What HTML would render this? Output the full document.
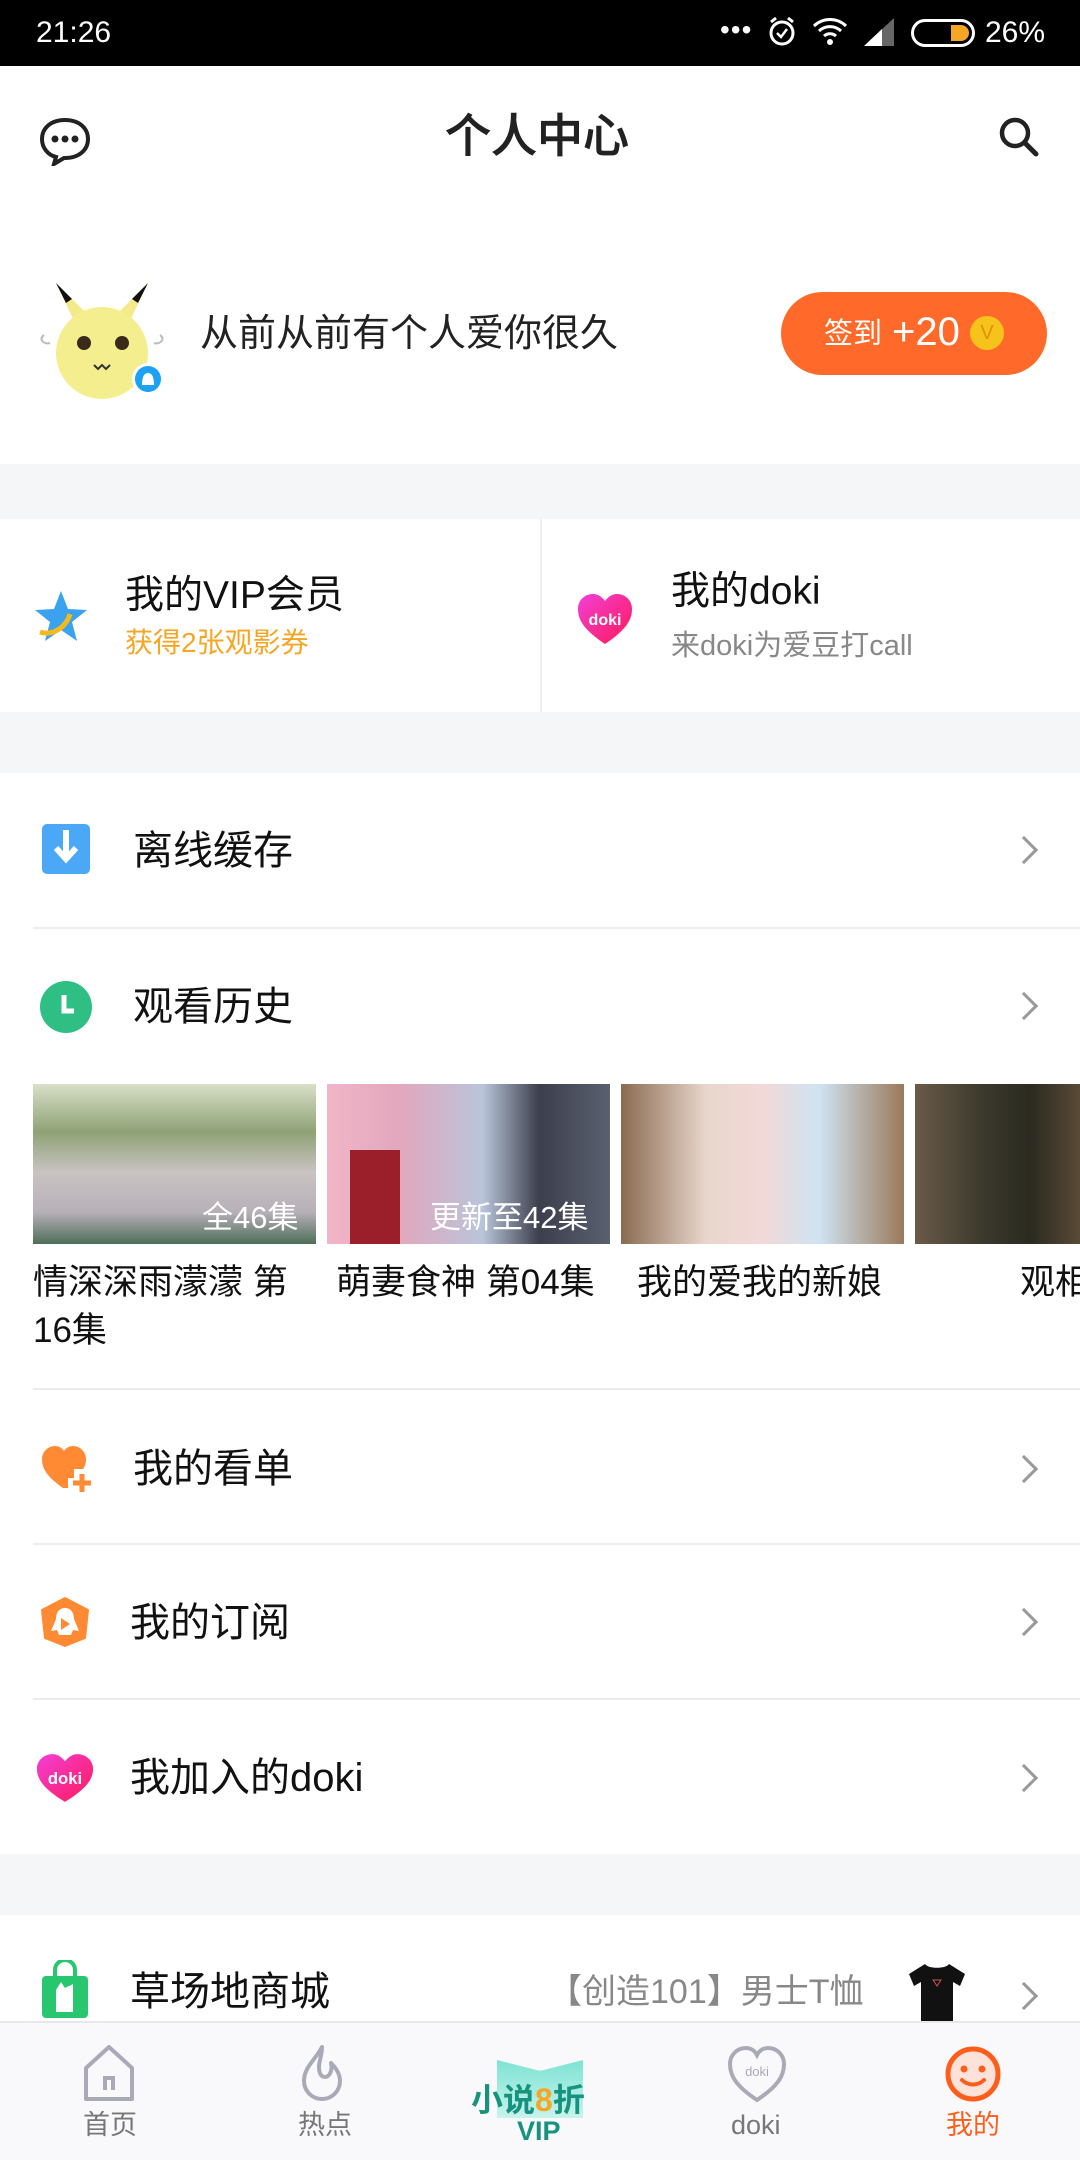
<!DOCTYPE html>
<html><head><meta charset="utf-8"><style>
*{margin:0;padding:0;box-sizing:border-box}
body{width:1080px;height:2160px;position:relative;background:#fff;font-family:"Liberation Sans","Noto Sans CJK SC",sans-serif;overflow:hidden;color:#111}
.a{position:absolute}
.t{position:absolute;white-space:nowrap;line-height:1}
.gray{position:absolute;left:0;width:1080px;background:#f5f6f8}
.div{position:absolute;left:33px;right:0;height:2px;background:#ececec}
.arr{position:absolute;left:1014px;width:20px;height:20px;border-right:3px solid #999;border-top:3px solid #999;transform:rotate(45deg)}
.row{font-size:40px;color:#111}
</style></head><body>
<div class="a" style="left:0;top:0;width:1080px;height:66px;background:#000"></div>
<div class="t" style="left:36px;top:18px;font-size:30px;color:#fff">21:26</div>
<div class="t" style="left:720px;top:16px;font-size:28px;color:#fff;letter-spacing:1px">•••</div>
<svg class="a" style="left:766px;top:14px" width="32" height="34" viewBox="0 0 32 34"><circle cx="16" cy="19" r="11" fill="none" stroke="#fff" stroke-width="3"/><path d="M11 19l4 4 6-8" fill="none" stroke="#fff" stroke-width="2.5"/><path d="M5 8l5-4M27 8l-5-4" stroke="#fff" stroke-width="3"/></svg>
<svg class="a" style="left:812px;top:16px" width="36" height="30" viewBox="0 0 36 30"><path d="M2 10a23 23 0 0 1 32 0M7 15a16 16 0 0 1 22 0M12 20a9 9 0 0 1 12 0" fill="none" stroke="#fff" stroke-width="3"/><circle cx="18" cy="26" r="3" fill="#fff"/></svg>
<svg class="a" style="left:862px;top:18px" width="34" height="28"><path d="M2 28L32 0V28Z" fill="#666"/><path d="M2 28L20 11V28Z" fill="#fff"/></svg>
<div class="a" style="left:911px;top:19px;width:64px;height:28px;border:3px solid #fff;border-radius:14px"></div>
<div class="a" style="left:951px;top:25px;width:18px;height:16px;background:#f5a623;border-radius:0 8px 8px 0"></div>
<div class="t" style="left:985px;top:18px;font-size:30px;color:#fff">26%</div>

<svg class="a" style="left:38px;top:116px" width="54" height="50" viewBox="0 0 54 50"><path d="M27 4C13 4 4 12 4 23c0 9 6 16 14 18l-2 7 10-6h1c14 0 23-8 23-19S41 4 27 4z" fill="none" stroke="#222" stroke-width="4"/><circle cx="17" cy="23" r="3.5" fill="#222"/><circle cx="27" cy="23" r="3.5" fill="#222"/><circle cx="37" cy="23" r="3.5" fill="#222"/></svg>
<div class="t" style="left:445px;top:113px;font-size:46px;color:#222;font-weight:500;-webkit-text-stroke:0.6px #222">个人中心</div>
<svg class="a" style="left:998px;top:116px" width="42" height="42" viewBox="0 0 42 42"><circle cx="17" cy="17" r="13" fill="none" stroke="#222" stroke-width="4.5"/><path d="M27 27l11 11" stroke="#222" stroke-width="5" stroke-linecap="round"/></svg>

<svg class="a" style="left:36px;top:275px" width="132" height="130" viewBox="0 0 132 130"><path d="M20 8L40 50 52 40z" fill="#f4ea8a"/><path d="M20 8L30 28 36 24z" fill="#111"/><path d="M112 8L92 50 80 40z" fill="#f4ea8a"/><path d="M112 8L102 28 96 24z" fill="#111"/><ellipse cx="66" cy="78" rx="46" ry="46" fill="#f5ee8e"/><circle cx="48" cy="68" r="7" fill="#3a2a1a"/><circle cx="86" cy="68" r="7" fill="#3a2a1a"/><path d="M58 90l4 4 4-4 4 4 4-4" stroke="#333" fill="none" stroke-width="2"/><path d="M8 60c-6 4 0 10 6 8M124 60c6 4 0 10-6 8" stroke="#bbb" fill="none" stroke-width="2"/><circle cx="112" cy="104" r="16" fill="#fff"/><circle cx="112" cy="104" r="13" fill="#1da1f2"/><path d="M106 110c0-8 2-12 6-12s6 4 6 12z" fill="#fff"/></svg>
<div class="t" style="left:200px;top:315px;font-size:38px;color:#222">从前从前有个人爱你很久</div>
<div class="a" style="left:781px;top:292px;width:266px;height:83px;border-radius:42px;background:#ff6a2a"></div>
<div class="t" style="left:824px;top:320px;font-size:29px;color:#fff">签到</div>
<div class="t" style="left:892px;top:312px;font-size:40px;color:#fff">+20</div>
<div class="a" style="left:970px;top:316px;width:34px;height:34px;border-radius:50%;background:#f6c31a;color:#e09000;font-size:20px;text-align:center;line-height:34px">V</div>

<div class="gray" style="top:464px;height:55px"></div>
<div class="a" style="left:540px;top:519px;width:2px;height:193px;background:#f0f0f0"></div>
<svg class="a" style="left:32px;top:588px" width="58" height="58" viewBox="0 0 58 58"><path d="M29 3l7 18 19 1-15 12 5 19-16-11-16 11 5-19L3 22l19-1z" fill="#3aa2ef"/><path d="M8 44c12 4 26-4 30-18" stroke="#f6b91a" stroke-width="5" fill="none"/></svg>
<div class="t" style="left:125px;top:576px;font-size:39px">我的VIP会员</div>
<div class="t" style="left:125px;top:629px;font-size:28px;color:#f5a623">获得2张观影券</div>
<svg class="a" style="left:576px;top:592px" width="58" height="54" viewBox="0 0 58 54"><defs><linearGradient id="dg" x1="0" y1="0" x2="1" y2="1"><stop offset="0" stop-color="#f23fd6"/><stop offset="1" stop-color="#ff1a5a"/></linearGradient></defs><path d="M29 52C8 38 2 28 2 17 2 8 9 2 17 2c5 0 9 3 12 7 3-4 7-7 12-7 8 0 15 6 15 15 0 11-6 21-27 35z" fill="url(#dg)"/><text x="29" y="33" font-size="16" font-weight="bold" fill="#fff" text-anchor="middle" font-family="Liberation Sans">doki</text></svg>
<div class="t" style="left:671px;top:572px;font-size:39px">我的doki</div>
<div class="t" style="left:671px;top:632px;font-size:29px;color:#888">来doki为爱豆打call</div>

<div class="gray" style="top:712px;height:61px"></div>

<div class="a" style="left:42px;top:824px;width:48px;height:50px;border-radius:5px;background:#4ba8f6"></div>
<svg class="a" style="left:42px;top:824px" width="48" height="50"><path d="M24 6v26M14 24l10 11 10-11" stroke="#fff" stroke-width="6" fill="none"/></svg>
<div class="t row" style="left:133px;top:831px">离线缓存</div>
<div class="arr" style="top:840px"></div>
<div class="div" style="top:927px"></div>

<div class="a" style="left:40px;top:981px;width:52px;height:52px;border-radius:50%;background:#2fbf84"></div>
<svg class="a" style="left:40px;top:981px" width="52" height="52"><path d="M24 14v16h10" stroke="#fff" stroke-width="5" fill="none"/></svg>
<div class="t row" style="left:133px;top:987px">观看历史</div>
<div class="arr" style="top:996px"></div>

<div class="a" style="left:33px;top:1084px;width:283px;height:160px;background:linear-gradient(180deg,#d8e0c8 0%,#8fa276 30%,#c9c3c2 55%,#b8b0b8 80%,#4e6e58 100%)"></div>
<div class="t" style="left:202px;top:1202px;font-size:31px;color:#fff">全46集</div>
<div class="a" style="left:327px;top:1084px;width:283px;height:160px;background:linear-gradient(90deg,#f2b6c8 0%,#e3a7bd 25%,#b9c4da 55%,#3c3f4c 75%,#5a6070 100%)"></div>
<div class="a" style="left:350px;top:1150px;width:50px;height:94px;background:#9a1f2a"></div>
<div class="t" style="left:430px;top:1202px;font-size:31px;color:#fff">更新至42集</div>
<div class="a" style="left:621px;top:1084px;width:283px;height:160px;background:linear-gradient(90deg,#8a6b50 0%,#e8d6cc 30%,#f2d9d8 50%,#cfe3f2 70%,#9a7a5c 100%)"></div>
<div class="a" style="left:915px;top:1084px;width:165px;height:160px;background:linear-gradient(90deg,#6b5a48 0%,#3c3a2c 40%,#2a2a20 70%,#5a4a38 100%)"></div>
<div class="t" style="left:33px;top:1265px;font-size:35px">情深深雨濛濛 第</div>
<div class="t" style="left:33px;top:1313px;font-size:35px">16集</div>
<div class="t" style="left:336px;top:1265px;font-size:35px">萌妻食神 第04集</div>
<div class="t" style="left:637px;top:1265px;font-size:35px">我的爱我的新娘</div>
<div class="t" style="left:1020px;top:1265px;font-size:35px">观相</div>
<div class="div" style="top:1388px"></div>

<svg class="a" style="left:40px;top:1444px" width="56" height="50" viewBox="0 0 56 50"><path d="M23 44C6 32 2 24 2 15 2 8 8 2 15 2c4 0 7 2 9 5 2-3 5-5 9-5 7 0 13 6 13 13 0 4-1 7-3 10H34v9h-6v10z" fill="#ff8a33"/><path d="M42 30v18M33 39h18" stroke="#ff8a33" stroke-width="5"/></svg>
<div class="t row" style="left:133px;top:1449px">我的看单</div>
<div class="arr" style="top:1459px"></div>
<div class="div" style="top:1543px"></div>

<svg class="a" style="left:38px;top:1596px" width="54" height="52" viewBox="0 0 54 52"><path d="M27 2l23 12-3 28-20 8-20-8L4 14z" fill="#ff8a33" stroke="#ff8a33" stroke-width="2" stroke-linejoin="round"/><path d="M27 12c-6 0-9 5-9 11l-5 12 6-1 2 5h12l2-5 6 1-5-12c0-6-3-11-9-11z" fill="#fff"/><path d="M23 22l9 6-9 6z" fill="#ff8a33"/></svg>
<div class="t row" style="left:130px;top:1603px">我的订阅</div>
<div class="arr" style="top:1612px"></div>
<div class="div" style="top:1698px"></div>

<svg class="a" style="left:34px;top:1752px" width="62" height="52" viewBox="0 0 58 50"><path d="M29 48C8 35 2 26 2 16 2 8 9 2 17 2c5 0 9 3 12 7 3-4 7-7 12-7 8 0 15 6 15 14 0 10-6 19-27 32z" fill="url(#dg)"/><text x="29" y="31" font-size="16" font-weight="bold" fill="#fff" text-anchor="middle" font-family="Liberation Sans">doki</text></svg>
<div class="t row" style="left:130px;top:1758px">我加入的doki</div>
<div class="arr" style="top:1768px"></div>

<div class="gray" style="top:1854px;height:61px"></div>

<svg class="a" style="left:40px;top:1960px" width="50" height="60" viewBox="0 0 50 60"><path d="M15 16V10a10 10 0 0 1 20 0v6" stroke="#28c76f" stroke-width="4" fill="none"/><rect x="2" y="16" width="46" height="42" rx="4" fill="#28c76f"/><path d="M16 52V30l5-8 4 6 8-4v28z" fill="#fff"/></svg>
<div class="t row" style="left:130px;top:1972px">草场地商城</div>
<div class="t" style="left:548px;top:1975px;font-size:34px;color:#888">【创造101】男士T恤</div>
<svg class="a" style="left:907px;top:1962px" width="60" height="60" viewBox="0 0 60 60"><path d="M18 2l-16 10 5 12 7-4v40h32V20l7 4 5-12L42 2c-3 5-21 5-24 0z" fill="#111"/><path d="M26 18h8l-4 6z" stroke="#c55" fill="none"/></svg>
<div class="arr" style="top:1986px"></div>

<div class="a" style="left:0;top:2021px;width:1080px;height:139px;background:#f9f9fb;border-top:2px solid #e8e8ea"></div>
<svg class="a" style="left:82px;top:2044px" width="54" height="58" viewBox="0 0 54 58"><path d="M27 3L4 24v31h46V24z" fill="none" stroke="#a9a9b8" stroke-width="4" stroke-linejoin="round"/><path d="M23 46V34h8v12" fill="none" stroke="#a9a9b8" stroke-width="4"/></svg>
<div class="t" style="left:83px;top:2112px;font-size:27px;color:#777">首页</div>
<svg class="a" style="left:300px;top:2044px" width="48" height="60" viewBox="0 0 48 60"><path d="M22 3c-6 12-18 20-18 34a18 18 0 0 0 36 0c0-8-5-14-9-18 2 8-2 14-6 14-5 0-6-6-6-10 0-6 3-12 3-20z" fill="none" stroke="#a9a9b8" stroke-width="4" stroke-linejoin="round"/></svg>
<div class="t" style="left:298px;top:2112px;font-size:27px;color:#777">热点</div>
<div class="a" style="left:497px;top:2060px;width:86px;height:58px;background:linear-gradient(180deg,#7ee3d4,#c8f3ec);clip-path:polygon(0 0,48% 18%,52% 18%,100% 0,100% 100%,0 100%)"></div>
<div class="t" style="left:471px;top:2084px;font-size:32px;font-weight:bold;color:#17927e">小说<span style="color:#f5a623">8</span>折</div>
<div class="t" style="left:517px;top:2118px;font-size:27px;font-weight:bold;color:#17927e">VIP</div>
<svg class="a" style="left:726px;top:2044px" width="62" height="60" viewBox="0 0 62 60"><path d="M31 56C10 42 4 32 4 20 4 11 11 4 20 4c5 0 9 3 11 7 2-4 6-7 11-7 9 0 16 7 16 16 0 12-6 22-27 36z" fill="none" stroke="#a9a9b8" stroke-width="4"/><text x="31" y="32" font-size="13" fill="#a9a9b8" text-anchor="middle" font-family="Liberation Sans">doki</text></svg>
<div class="t" style="left:731px;top:2112px;font-size:27px;color:#777">doki</div>
<svg class="a" style="left:944px;top:2044px" width="58" height="60" viewBox="0 0 58 60"><circle cx="29" cy="30" r="25" fill="#fde2da" stroke="#ff5e1a" stroke-width="5"/><circle cx="20" cy="25" r="3.5" fill="#ff5e1a"/><circle cx="38" cy="25" r="3.5" fill="#ff5e1a"/><path d="M18 36c6 6 16 6 22 0" stroke="#ff5e1a" stroke-width="4" fill="none" stroke-linecap="round"/></svg>
<div class="t" style="left:946px;top:2112px;font-size:27px;color:#ff5e1a">我的</div>
</body></html>
